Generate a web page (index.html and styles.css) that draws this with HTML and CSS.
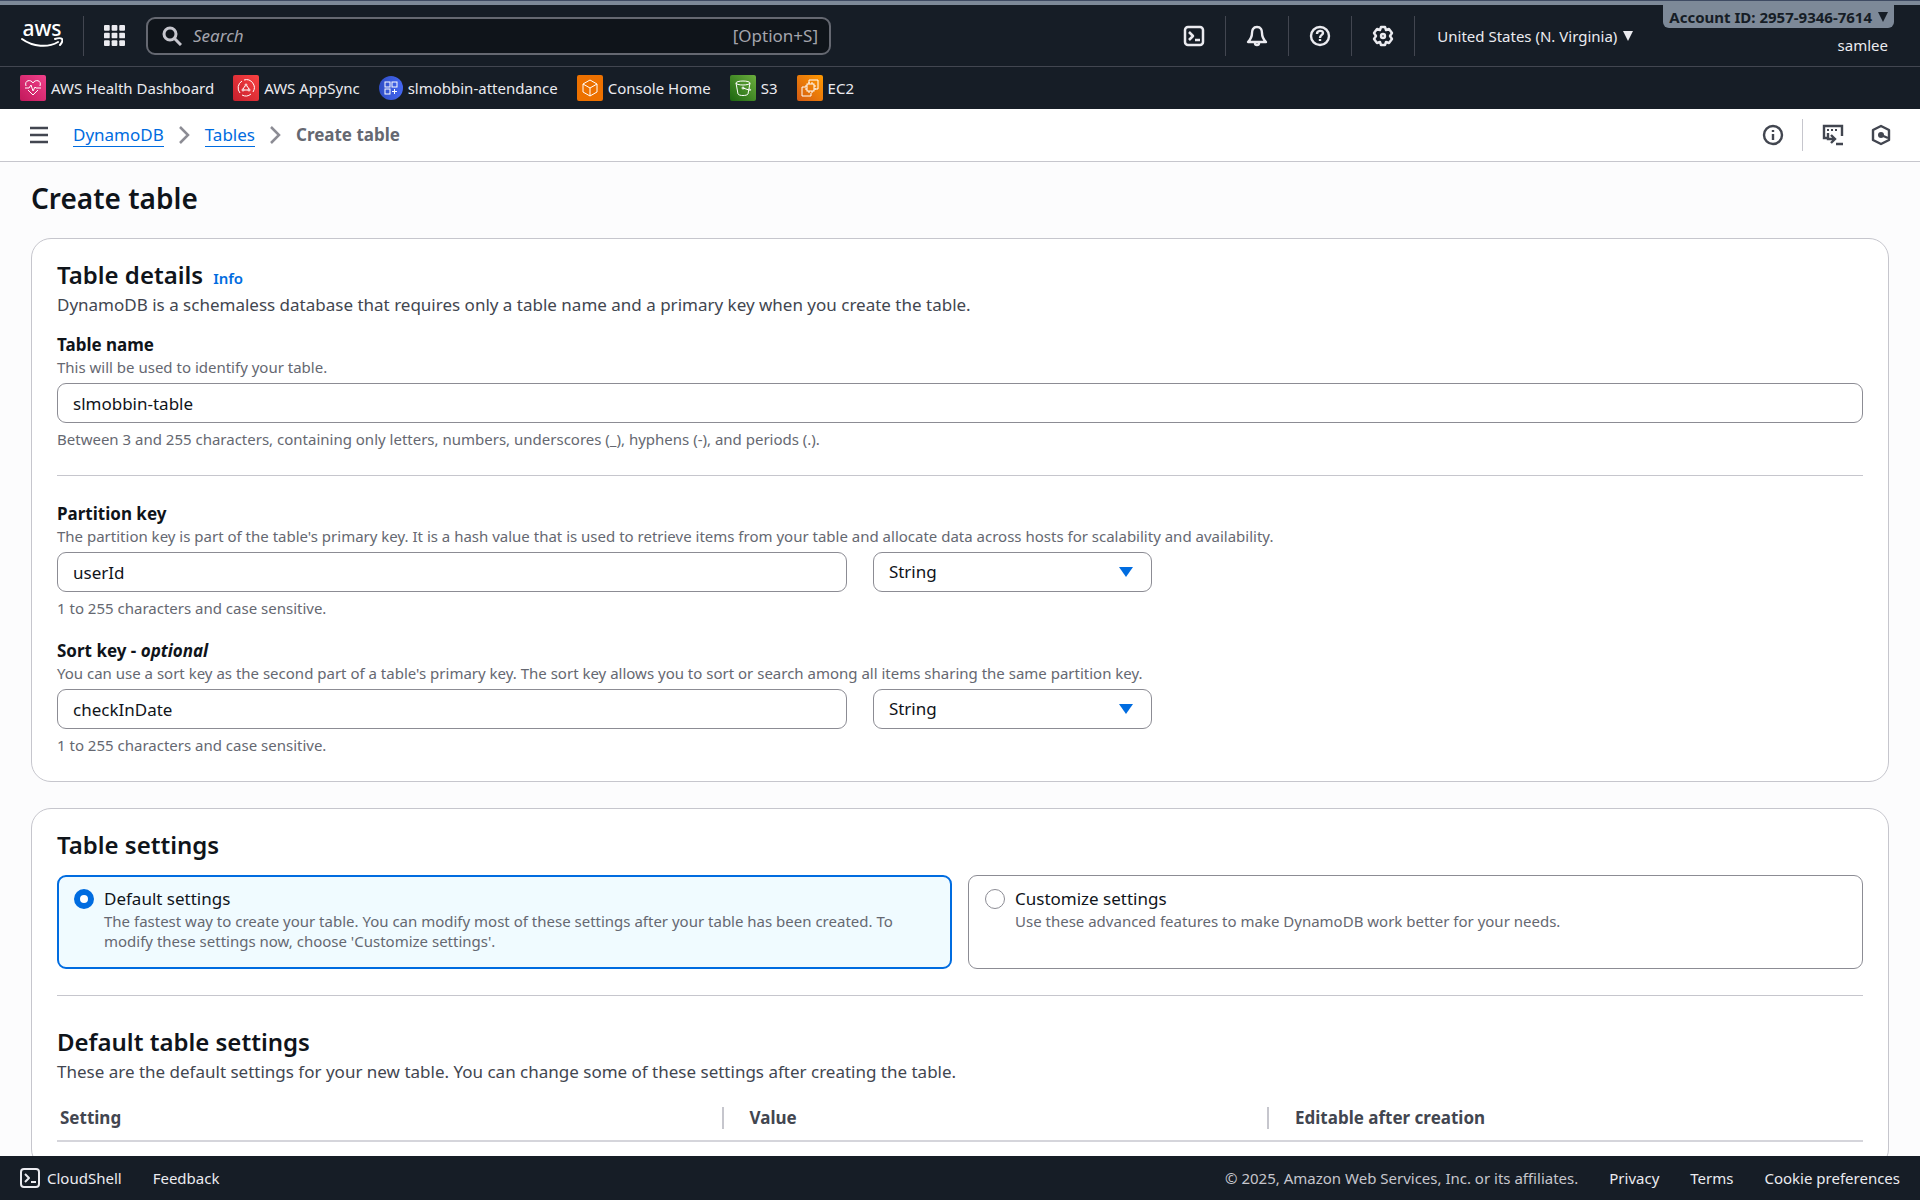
FILE: index.html
```html
<!DOCTYPE html>
<html lang="en">
<head>
    <meta charset="UTF-8">
    <meta name="viewport" content="width=device-width, initial-scale=1.0">
    <title>Create table | DynamoDB</title>
    <link rel="stylesheet" href="styles.css">
</head>
<body>
    <header class="top-nav">
        <a href="#" class="logo" aria-label="AWS home">
            <svg width="42" height="46" viewBox="0 -8 42 46">
                <text x="21" y="15" text-anchor="middle" class="logo-text">aws</text>
                <path d="M1 18c11 8 26 9 36 3" fill="none" stroke="#fff" stroke-width="2" stroke-linecap="round"/>
                <path d="M34 18c3-1 6-1 7 0s0 4-2 6" fill="none" stroke="#fff" stroke-width="2" stroke-linecap="round"/>
            </svg>
        </a>
        <button class="icon-btn apps-btn" aria-label="Services">
            <svg width="21" height="21" viewBox="0 0 22 22" fill="currentColor">
                <rect x="0" y="0" width="6" height="6" rx="1"/><rect x="8" y="0" width="6" height="6" rx="1"/><rect x="16" y="0" width="6" height="6" rx="1"/>
                <rect x="0" y="8" width="6" height="6" rx="1"/><rect x="8" y="8" width="6" height="6" rx="1"/><rect x="16" y="8" width="6" height="6" rx="1"/>
                <rect x="0" y="16" width="6" height="6" rx="1"/><rect x="8" y="16" width="6" height="6" rx="1"/><rect x="16" y="16" width="6" height="6" rx="1"/>
            </svg>
        </button>
        <div class="search-box">
            <svg width="20" height="20" viewBox="0 0 20 20" fill="none" stroke="currentColor" stroke-width="3">
                <circle cx="8" cy="8" r="6"/><path d="M12 12l7 7"/>
            </svg>
            <input type="text" placeholder="Search" aria-label="Search">
            <span class="shortcut">[Option+S]</span>
        </div>
        <div class="nav-icons">
            <button class="icon-btn" aria-label="CloudShell">
                <svg width="22" height="22" viewBox="0 0 22 22" fill="none" stroke="currentColor" stroke-width="2.500" stroke-linejoin="round">
                    <rect x="2" y="2" width="18" height="18" rx="3"/><path d="M6 7l4 4-4 4M12 15h5"/>
                </svg>
            </button>
            <button class="icon-btn" aria-label="Notifications">
                <svg width="22" height="22" viewBox="0 0 22 22" fill="none" stroke="currentColor" stroke-width="2.400" stroke-linejoin="round">
                    <path d="M11 2C7 2 6 5 6 8c0 4-1 6-4 9h18c-3-3-4-5-4-9 0-3-1-6-5-6z"/><path d="M9 18a2 2 0 0 0 4 0"/>
                </svg>
            </button>
            <button class="icon-btn" aria-label="Help">
                <svg width="22" height="22" viewBox="0 0 22 22" fill="none" stroke="currentColor" stroke-width="2.400">
                    <circle cx="11" cy="11" r="9"/><path d="M8 9c0-4 6-4 6-1 0 2-3 2-3 5M11 14v2"/>
                </svg>
            </button>
            <button class="icon-btn" aria-label="Settings">
                <svg width="22" height="22" viewBox="0 0 22 22" fill="none" stroke="currentColor" stroke-width="2.400" stroke-linejoin="round">
                    <path d="M9 2h4l1 3 3-1 3 4-2 3 2 3-3 4-3-1-1 3H9l-1-3-3 1-3-4 2-3-2-3 3-4 3 1z"/><circle cx="11" cy="11" r="2"/>
                </svg>
            </button>
        </div>
        <button class="region-btn">United States (N. Virginia)
            <svg width="10" height="10" viewBox="0 0 10 10" fill="currentColor"><path d="M0 0h10L5 10z"/></svg>
        </button>
        <div class="account">
            <button class="account-id">Account ID: 2957-9346-7614
                <svg width="10" height="10" viewBox="0 0 10 10" fill="currentColor"><path d="M0 0h10L5 10z"/></svg>
            </button>
            <span class="user-name">samlee</span>
        </div>
    </header>

    <nav class="favorites" aria-label="Favorites">
        <a href="#">
            <span class="fav-icon health">
                <svg width="18" height="18" viewBox="0 0 18 18" fill="none" stroke="#fff" stroke-width="1">
                    <path d="M2 7C0 1 7 0 9 4c2-4 9-3 7 3M4 11l5 5 5-5M1 9h4l2-3 2 6 2-4 1 1h5"/>
                </svg>
            </span>AWS Health Dashboard</a>
        <a href="#">
            <span class="fav-icon appsync">
                <svg width="18" height="18" viewBox="0 0 18 18" fill="none" stroke="#fff" stroke-width="1">
                    <path d="M5 2a8 8 0 0 0-2 12M7 1a8 8 0 0 1 9 12M5 16a8 8 0 0 0 9-1"/><circle cx="9" cy="6" r="1"/><circle cx="6" cy="11" r="1"/><circle cx="12" cy="11" r="1"/><path d="M8 7l-2 3M10 7l2 3M7 11h4"/>
                </svg>
            </span>AWS AppSync</a>
        <a href="#">
            <span class="fav-icon app">
                <svg width="14" height="14" viewBox="0 0 14 14" fill="none" stroke="#fff" stroke-width="1">
                    <rect x="1" y="1" width="5" height="5"/><rect x="8" y="1" width="5" height="5"/><rect x="1" y="8" width="5" height="5"/><path d="M10.500 8v5M8 10.500h5"/>
                </svg>
            </span>slmobbin-attendance</a>
        <a href="#">
            <span class="fav-icon console">
                <svg width="18" height="18" viewBox="0 0 18 18" fill="none" stroke="#fff" stroke-width="1" stroke-linejoin="round">
                    <path d="M9 1l7 4v8l-7 4-7-4V5zM2 5l7 4 7-4M9 9v8"/>
                </svg>
            </span>Console Home</a>
        <a href="#">
            <span class="fav-icon s3">
                <svg width="18" height="18" viewBox="0 0 18 18" fill="none" stroke="#fff" stroke-width="1">
                    <ellipse cx="9" cy="4" rx="7" ry="2"/><path d="M2 4l2 11c1 2 9 2 10 0l2-11M9 9l6 2c3 1 2-1 0-1"/><circle cx="9" cy="9" r="1"/>
                </svg>
            </span>S3</a>
        <a href="#">
            <span class="fav-icon ec2">
                <svg width="18" height="18" viewBox="0 0 18 18" fill="none" stroke="#fff" stroke-width="1">
                    <path d="M8 4V1h9v9h-3M5 8H1v9h9v-3"/><rect x="6" y="5" width="7" height="7"/><path d="M8 3v2M11 3v2M8 12v2M11 12v2M4 7h2M4 10h2M13 7h2M13 10h2"/>
                </svg>
            </span>EC2</a>
    </nav>

    <div class="breadcrumb-bar">
        <button class="icon-btn" aria-label="Open navigation">
            <svg width="18" height="18" viewBox="0 0 18 18" stroke="currentColor" stroke-width="2.500"><path d="M0 2h18M0 9h18M0 16h18"/></svg>
        </button>
        <nav class="breadcrumbs" aria-label="Breadcrumbs">
            <a href="#">DynamoDB</a>
            <svg width="11" height="18" viewBox="0 0 11 18" fill="none" stroke="#8c8c94" stroke-width="2.500"><path d="M1 1l8 8-8 8"/></svg>
            <a href="#">Tables</a>
            <svg width="11" height="18" viewBox="0 0 11 18" fill="none" stroke="#8c8c94" stroke-width="2.500"><path d="M1 1l8 8-8 8"/></svg>
            <span>Create table</span>
        </nav>
        <div class="page-tools">
            <button class="icon-btn" aria-label="Info">
                <svg width="22" height="22" viewBox="0 0 22 22" fill="none" stroke="currentColor" stroke-width="2.400">
                    <circle cx="11" cy="11" r="9"/><path d="M11 6v2M11 10v6"/>
                </svg>
            </button>
            <button class="icon-btn" aria-label="Console to code">
                <svg width="22" height="22" viewBox="0 0 22 22" fill="none" stroke="currentColor" stroke-width="2.400">
                    <path d="M5 14H2V2h18v10"/><path d="M5 6h2M9 6h2M13 6h2" stroke-width="2"/><path d="M6 9v6h6M9 11l4 4-4 4M14 20h7"/>
                </svg>
            </button>
            <button class="icon-btn" aria-label="Amazon Q">
                <svg width="20" height="22" viewBox="0 0 20 22" fill="none" stroke="currentColor" stroke-width="2.400" stroke-linejoin="round">
                    <path d="M10 2l8 4v10l-8 4-8-4V6z"/><circle cx="10" cy="11" r="3" fill="currentColor" stroke="none"/><path d="M10 11l7 3"/>
                </svg>
            </button>
        </div>
    </div>

    <main>
        <h1>Create table</h1>

        <section class="card">
            <div class="card-title">
                <h2>Table details</h2>
                <a href="#" class="info">Info</a>
            </div>
            <p class="description">DynamoDB is a schemaless database that requires only a table name and a primary key when you create the table.</p>

            <div class="field first-field">
                <label for="table-name">Table name</label>
                <p class="hint">This will be used to identify your table.</p>
                <input type="text" id="table-name" value="slmobbin-table">
                <p class="hint constraint">Between 3 and 255 characters, containing only letters, numbers, underscores (_), hyphens (-), and periods (.).</p>
            </div>

            <hr>

            <div class="field">
                <label for="partition-key">Partition key</label>
                <p class="hint">The partition key is part of the table's primary key. It is a hash value that is used to retrieve items from your table and allocate data across hosts for scalability and availability.</p>
                <div class="key-row">
                    <input type="text" id="partition-key" value="userId">
                    <div class="select-wrap">
                        <select aria-label="Partition key type">
                            <option>String</option>
                            <option>Number</option>
                            <option>Binary</option>
                        </select>
                    </div>
                </div>
                <p class="hint constraint">1 to 255 characters and case sensitive.</p>
            </div>

            <div class="field">
                <label for="sort-key">Sort key - <i>optional</i></label>
                <p class="hint">You can use a sort key as the second part of a table's primary key. The sort key allows you to sort or search among all items sharing the same partition key.</p>
                <div class="key-row">
                    <input type="text" id="sort-key" value="checkInDate">
                    <div class="select-wrap">
                        <select aria-label="Sort key type">
                            <option>String</option>
                            <option>Number</option>
                            <option>Binary</option>
                        </select>
                    </div>
                </div>
                <p class="hint constraint">1 to 255 characters and case sensitive.</p>
            </div>
        </section>

        <section class="card">
            <h2>Table settings</h2>
            <div class="tiles">
                <label class="tile">
                    <input type="radio" name="settings" checked>
                    <span class="tile-text">
                        <span class="tile-title">Default settings</span>
                        <span class="hint">The fastest way to create your table. You can modify most of these settings after your table has been created. To modify these settings now, choose 'Customize settings'.</span>
                    </span>
                </label>
                <label class="tile">
                    <input type="radio" name="settings">
                    <span class="tile-text">
                        <span class="tile-title">Customize settings</span>
                        <span class="hint">Use these advanced features to make DynamoDB work better for your needs.</span>
                    </span>
                </label>
            </div>

            <hr>

            <h2 class="defaults-title">Default table settings</h2>
            <p class="description">These are the default settings for your new table. You can change some of these settings after creating the table.</p>
            <table>
                <thead>
                    <tr>
                        <th class="col-setting"><span>Setting</span></th>
                        <th class="col-value"><span>Value</span></th>
                        <th class="col-editable"><span>Editable after creation</span></th>
                    </tr>
                </thead>
            </table>
        </section>
    </main>

    <footer>
        <button class="shell-btn">
            <svg width="20" height="20" viewBox="0 0 20 20" fill="none" stroke="currentColor" stroke-width="2" stroke-linejoin="round">
                <rect x="1" y="1" width="18" height="18" rx="3"/><path d="M5 6l4 4-4 4M11 14h5"/>
            </svg>
            CloudShell
        </button>
        <a href="#">Feedback</a>
        <span class="copyright">© 2025, Amazon Web Services, Inc. or its affiliates.</span>
        <a href="#">Privacy</a>
        <a href="#">Terms</a>
        <button>Cookie preferences</button>
    </footer>
</body>
</html>
```
FILE: styles.css
```css
* {
    margin: 0;
    padding: 0;
    box-sizing: border-box;
}
body {
    display: flex;
    flex-direction: column;
    height: 100vh;
    border-top: 1px solid #3f4b63;
    font-family: "Noto Sans", "Open Sans", sans-serif;
    font-size: 17px;
    line-height: 24px;
    color: #0f141a;
    background: #fcfcfd;
}
button, input, select {
    font: inherit;
    color: inherit;
}
button {
    border: none;
    background: none;
    cursor: pointer;
}
a {
    color: inherit;
    text-decoration: none;
}
svg {
    display: block;
    flex: none;
}

/* Top navigation */
.top-nav {
    display: flex;
    align-items: center;
    flex: none;
    height: 66px;
    padding: 0 26px 0 21px;
    border-top: 4px solid #7d8998;
    border-bottom: 1px solid #424650;
    background: #161d26;
    color: #ebebf0;
    font-size: 15px;
}
.logo {
    padding-right: 20px;
}
.logo-text {
    font-size: 21px;
    font-weight: 500;
    fill: #fff;
}
.apps-btn {
    height: 40px;
    padding: 0 21px 0 20px;
    border-left: 1px solid #424650;
    display: flex;
    align-items: center;
}
.search-box {
    display: flex;
    align-items: center;
    gap: 11px;
    width: 37%;
    max-width: 685px;
    height: 38px;
    padding: 0 11px 0 14px;
    border: 2px solid #656871;
    border-radius: 9px;
    background: #0f141a;
    color: #a4a4ad;
    font-size: 17px;
}
.search-box svg {
    color: #c6c6cd;
}
.search-box input {
    flex: 1;
    min-width: 0;
    border: none;
    outline: none;
    background: none;
}
.search-box input::placeholder {
    color: #a4a4ad;
    font-style: italic;
}
.nav-icons {
    display: flex;
    margin-left: auto;
}
.nav-icons .icon-btn {
    display: flex;
    align-items: center;
    justify-content: center;
    width: 63px;
    height: 40px;
    border-right: 1px solid #424650;
}
.region-btn, .account-id {
    display: flex;
    align-items: center;
    gap: 6px;
    white-space: nowrap;
}
.region-btn {
    padding: 0 30px 0 22px;
}
.account {
    display: flex;
    flex-direction: column;
    align-items: flex-end;
    align-self: flex-start;
    gap: 6px;
}
.account-id {
    height: 23px;
    padding: 0 6px;
    border-radius: 0 0 6px 6px;
    background: #7d8998;
    color: #161d26;
    font-weight: 700;
}
.user-name {
    padding-right: 6px;
    line-height: 22px;
}

/* Favorites bar */
.favorites {
    display: flex;
    align-items: center;
    flex: none;
    gap: 19px;
    height: 42px;
    padding: 0 20px;
    background: #161d26;
    color: #ebebf0;
    font-size: 15px;
}
.favorites a {
    display: flex;
    align-items: center;
    gap: 5px;
}
.fav-icon {
    display: flex;
    align-items: center;
    justify-content: center;
    width: 26px;
    height: 26px;
    border-radius: 2px;
}
.health {
    background: linear-gradient(45deg, #c2185b, #f0408a);
}
.appsync {
    background: linear-gradient(45deg, #c71f2d, #fa4242);
}
.app {
    width: 24px;
    height: 24px;
    border-radius: 50%;
    background: linear-gradient(90deg, #2f4dc4, #4467f2);
}
.console {
    background: #ed7100;
}
.s3 {
    background: linear-gradient(45deg, #1b660f, #6cae3e);
}
.ec2 {
    background: linear-gradient(45deg, #d45b14, #f90);
}

/* Breadcrumbs */
.breadcrumb-bar {
    display: flex;
    align-items: center;
    flex: none;
    height: 53px;
    padding: 0 29px 0 30px;
    border-bottom: 1px solid #c6c6cd;
    background: #fff;
    color: #424650;
}
.breadcrumbs {
    display: flex;
    align-items: center;
    gap: 15px;
    margin-left: 25px;
}
.breadcrumbs a {
    line-height: 22px;
    border-bottom: 1px solid #006ce0;
    color: #006ce0;
}
.breadcrumbs span {
    color: #656871;
    font-weight: 700;
}
.page-tools {
    display: flex;
    align-items: center;
    margin-left: auto;
}
.page-tools .icon-btn:first-child {
    padding: 5px 18px 5px 0;
    margin-right: 19px;
    border-right: 1px solid #c6c6cd;
}
.page-tools .icon-btn:last-child {
    margin-left: 27px;
}

/* Page content */
main {
    flex: 1;
    min-height: 0;
    overflow-y: auto;
    scrollbar-width: none;
    padding: 18px 31px 0;
}
h1 {
    margin-bottom: 22px;
    font-size: 28px;
    font-weight: 600;
    line-height: 36px;
}
h2 {
    font-size: 24px;
    font-weight: 600;
    line-height: 30px;
}
.card {
    margin-bottom: 26px;
    padding: 21px 25px 26px;
    border: 1px solid #c6c6cd;
    border-radius: 20px;
    background: #fff;
}
.card-title {
    display: flex;
    align-items: baseline;
    gap: 10px;
}
.info {
    color: #006ce0;
    font-size: 15px;
    font-weight: 600;
}
.description {
    line-height: 30px;
    color: #424650;
}
.field {
    margin-top: 21px;
}
.first-field {
    margin-top: 13px;
}
.field label {
    display: block;
    font-weight: 700;
}
.hint {
    font-size: 15px;
    line-height: 20px;
    color: #656871;
}
.field .hint {
    margin-bottom: 6px;
}
.field .constraint {
    margin: 6px 0 0;
}
.field input, .field select {
    width: 100%;
    height: 40px;
    padding: 0 15px;
    border: 1px solid #8c8c94;
    border-radius: 9px;
    background: #fff;
}
.field input {
    display: block;
}
.key-row {
    display: grid;
    grid-template-columns: 68fr 24fr 59fr;
    gap: 26px;
}
.select-wrap {
    position: relative;
}
.select-wrap select {
    display: block;
    appearance: none;
}
.select-wrap::after {
    content: "";
    position: absolute;
    top: 15px;
    right: 19px;
    border: 7px solid transparent;
    border-top: 10px solid #006ce0;
    border-bottom: none;
    pointer-events: none;
}
hr {
    margin: 26px 0;
    border: none;
    border-top: 1px solid #c6c6cd;
}

/* Settings tiles */
.tiles {
    display: grid;
    grid-template-columns: 1fr 1fr;
    gap: 16px;
    margin-top: 15px;
}
.tile {
    display: flex;
    gap: 10px;
    min-height: 94px;
    padding: 11px 16px;
    border: 1px solid #8c8c94;
    border-radius: 9px;
    cursor: pointer;
}
.tile:has(:checked) {
    padding: 10px 15px;
    border: 2px solid #006ce0;
    background: #f0fbff;
}
.tile input {
    appearance: none;
    flex: none;
    width: 20px;
    height: 20px;
    margin-top: 2px;
    border: 1px solid #8c8c94;
    border-radius: 50%;
    background: #fff;
}
.tile input:checked {
    border: 6px solid #006ce0;
}
.tile-title, .tile .hint {
    display: block;
}

/* Settings table */
.defaults-title {
    margin-top: 31px;
}
table {
    width: 100%;
    margin-top: 8px;
    border-collapse: collapse;
    table-layout: fixed;
}
th {
    height: 46px;
    padding: 0;
    border-bottom: 2px solid #d5d5db;
    color: #424650;
    font-weight: 700;
    text-align: left;
}
th span {
    display: block;
    padding-left: 26px;
    border-left: 2px solid #c6c6cd;
    line-height: 22px;
}
th:first-child span {
    padding-left: 3px;
    border: none;
}
.col-setting {
    width: 36.8%;
}
.col-value {
    width: 30.2%;
}
.col-editable {
    width: 33%;
}

/* Footer */
footer {
    display: flex;
    align-items: center;
    flex: none;
    gap: 31px;
    height: 44px;
    padding: 0 20px;
    background: #161d26;
    color: #ebebf0;
    font-size: 15px;
}
.shell-btn {
    display: flex;
    align-items: center;
    gap: 7px;
}
.copyright {
    margin-left: auto;
    color: #c6c6cd;
}
```
